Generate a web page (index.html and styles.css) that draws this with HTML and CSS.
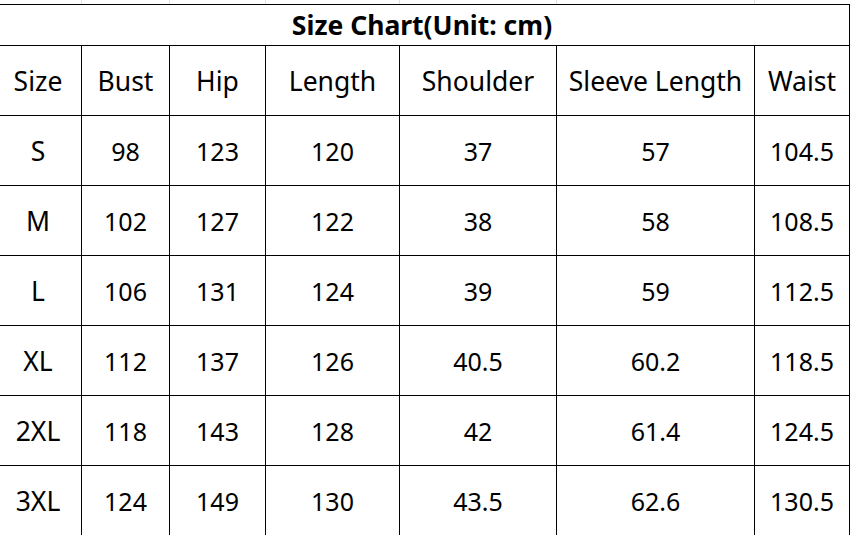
FILE: index.html
```html
<!DOCTYPE html>
<html>
<head>
<meta charset="utf-8">
<link rel="stylesheet" href="styles.css">
</head>
<body>
<div class="sheet">
  <div class="gridstrip">
    <span></span><span></span><span></span><span></span><span></span><span></span><span></span>
  </div>
  <div class="chart">
    <div class="title">Size Chart(Unit: cm)</div>
    <div class="cell head">Size</div><div class="cell head">Bust</div><div class="cell head">Hip</div><div class="cell head">Length</div><div class="cell head">Shoulder</div><div class="cell head">Sleeve Length</div><div class="cell head">Waist</div>
    <div class="cell size">S</div><div class="cell">98</div><div class="cell">123</div><div class="cell">120</div><div class="cell">37</div><div class="cell">57</div><div class="cell">104.5</div>
    <div class="cell size">M</div><div class="cell">102</div><div class="cell">127</div><div class="cell">122</div><div class="cell">38</div><div class="cell">58</div><div class="cell">108.5</div>
    <div class="cell size">L</div><div class="cell">106</div><div class="cell">131</div><div class="cell">124</div><div class="cell">39</div><div class="cell">59</div><div class="cell">112.5</div>
    <div class="cell size">XL</div><div class="cell">112</div><div class="cell">137</div><div class="cell">126</div><div class="cell">40.5</div><div class="cell">60.2</div><div class="cell">118.5</div>
    <div class="cell size">2XL</div><div class="cell">118</div><div class="cell">143</div><div class="cell">128</div><div class="cell">42</div><div class="cell">61.4</div><div class="cell">124.5</div>
    <div class="cell size">3XL</div><div class="cell">124</div><div class="cell">149</div><div class="cell">130</div><div class="cell">43.5</div><div class="cell">62.6</div><div class="cell">130.5</div>
  </div>
</div>
</body>
</html>
```

FILE: styles.css
```css
* { box-sizing: border-box; }
html, body {
  margin: 0;
  padding: 0;
  background: #fff;
  overflow: hidden;
}
body {
  font-family: "Noto Sans", "Open Sans", sans-serif;
  color: #000;
}
.sheet {
  width: 855px;
  height: 535px;
  margin-left: -5px;
  overflow: hidden;
}
.gridstrip,
.chart {
  display: grid;
  grid-template-columns: 87px 88px 96px 134px 157px 198px 95px;
}
.gridstrip {
  height: 4px;
}
.gridstrip span {
  border-right: 1px solid #e1e1e1;
}
.gridstrip span:last-child {
  border-right: none;
}
.chart {
  border-top: 1px solid #000;
  grid-auto-rows: 70px;
  grid-template-rows: 41px;
}
.title {
  grid-column: 1 / -1;
  border-right: 1px solid #000;
  border-bottom: 1px solid #000;
  display: flex;
  align-items: center;
  justify-content: center;
  font-weight: 700;
  font-size: 26.5px;
  padding-bottom: 1px;
}
.cell {
  border-right: 1px solid #000;
  border-bottom: 1px solid #000;
  display: flex;
  align-items: center;
  justify-content: center;
  font-size: 25px;
  white-space: nowrap;
}
.head,
.size {
  font-size: 26.5px;
}
```
